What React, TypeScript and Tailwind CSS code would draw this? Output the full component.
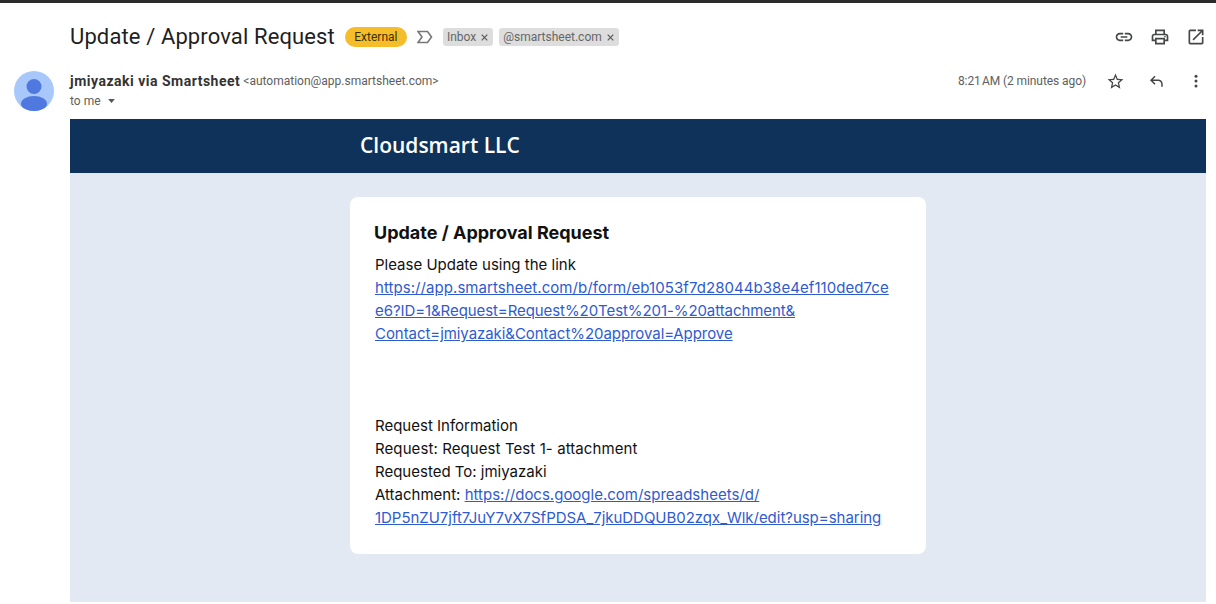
import React from "react";

const Chip = ({ label }: { label: string }) => (
  <span className="flex h-[18px] items-center rounded-[3px] bg-[#dddddd] pl-[4px] pr-[5px] text-[12px] text-[#666666]">
    {label}
    <svg viewBox="0 0 10 10" className="ml-[5px] h-[7px] w-[7px]" fill="none" stroke="#555" strokeWidth="1.6">
      <path d="M1 1l8 8M9 1l-8 8" />
    </svg>
  </span>
);

export default function App() {
  return (
    <div className="h-[604px] w-[1216px] overflow-hidden bg-white font-['Roboto',sans-serif]">
      <div className="h-[3px] bg-[#2b2b2b]" />
      <div className="flex h-[46px] items-start pl-[70px] pr-[10px] pt-[20px]">
        <h1 className="text-[22px] leading-[28px] tracking-[0.12px] text-[#1f1f1f]">Update / Approval Request</h1>
        <span className="ml-[10px] mt-[4px] flex h-[20px] w-[62px] items-center justify-center rounded-[10px] bg-[#f6bd2b] text-[12px] text-[#3c3000]">
          External
        </span>
        <svg viewBox="0 0 16 14" className="ml-[10px] mt-[7px] h-[14px] w-[16px]" fill="none" stroke="#777" strokeWidth="1.6">
          <path d="M1 1.5h9.5L14.5 7l-4 5.5H1L5 7z" />
        </svg>
        <div className="ml-[10px] mt-[5px] flex gap-[6px]">
          <Chip label="Inbox" />
          <Chip label="@smartsheet.com" />
        </div>
        <div className="ml-auto mt-[4px] flex items-center gap-[16px]">
          <svg viewBox="0 0 24 24" className="h-[20px] w-[20px]" fill="#444746">
            <path d="M17 7h-4v2h4c1.65 0 3 1.35 3 3s-1.35 3-3 3h-4v2h4c2.76 0 5-2.24 5-5s-2.24-5-5-5zm-6 8H7c-1.65 0-3-1.35-3-3s1.35-3 3-3h4V7H7c-2.76 0-5 2.24-5 5s2.24 5 5 5h4v-2zm-3-4h8v2H8z" />
          </svg>
          <svg viewBox="0 0 24 24" className="h-[20px] w-[20px]" fill="#444746">
            <path d="M19 8h-1V3H6v5H5c-1.66 0-3 1.34-3 3v6h4v4h12v-4h4v-6c0-1.66-1.34-3-3-3zM8 5h8v3H8V5zm8 14H8v-4h8v4zm2-4v-2H6v2H4v-4c0-.55.45-1 1-1h14c.55 0 1 .45 1 1v4h-2z" />
            <circle cx="18" cy="11.5" r="1" />
          </svg>
          <svg viewBox="0 0 24 24" className="h-[20px] w-[20px]" fill="#444746">
            <path d="M19 19H5V5h7V3H5a2 2 0 0 0-2 2v14a2 2 0 0 0 2 2h14c1.1 0 2-.9 2-2v-7h-2v7zM14 3v2h3.59l-9.83 9.83 1.41 1.41L19 6.41V10h2V3h-7z" />
          </svg>
        </div>
      </div>
      <div className="flex h-[70px] pl-[14px] pr-[11px]">
        <svg viewBox="0 0 40 40" className="mt-[22px] h-[40px] w-[40px] shrink-0">
          <defs>
            <clipPath id="avatar-clip">
              <circle cx="20" cy="20" r="20" />
            </clipPath>
          </defs>
          <circle cx="20" cy="20" r="20" fill="#a8c7fa" />
          <g clipPath="url(#avatar-clip)" fill="#4f79de">
            <circle cx="20" cy="15.5" r="7.5" />
            <ellipse cx="20" cy="33" rx="13" ry="8" />
          </g>
        </svg>
        <div className="ml-[16px] flex-1 pt-[22px]">
          <div className="flex h-[20px] items-center">
            <span className="text-[14px] font-bold tracking-[0.5px] text-[#333333]">jmiyazaki via Smartsheet</span>
            <span className="ml-[3px] text-[12px] text-[#5e5e5e]">&lt;automation@app.smartsheet.com&gt;</span>
          </div>
          <div className="flex h-[20px] items-center text-[12px] text-[#5e5e5e]">
            to me
            <svg viewBox="0 0 10 6" className="ml-[7px] h-[4px] w-[7px]" fill="#555">
              <path d="M0 0h10L5 6z" />
            </svg>
          </div>
        </div>
        <div className="box-content flex h-[20px] items-center gap-[22px] self-start pt-[22px]">
          <span className="mr-[-2px] text-[12px] tracking-[-0.08px] text-[#5e5e5e]">8:21{"\u200a"}AM (2 minutes ago)</span>
          <svg viewBox="0 0 24 24" className="h-[19px] w-[19px]" fill="#444746">
            <path d="M22 9.24l-7.19-.62L12 2 9.19 8.63 2 9.24l5.46 4.73L5.82 21 12 17.27 18.18 21l-1.63-7.03L22 9.24zM12 15.4l-3.76 2.27 1-4.28-3.32-2.88 4.38-.38L12 6.1l1.71 4.04 4.38.38-3.32 2.88 1 4.28L12 15.4z" />
          </svg>
          <svg viewBox="0 0 24 24" className="h-[18px] w-[18px]" fill="#444746">
            <path d="M21 19.5h-2v-3.5c0-2.2-1.8-4-4-4H7.83l3.58 3.59L10 17l-6-6 6-6 1.41 1.41L7.83 10H15c3.31 0 6 2.69 6 6v3.5z" />
          </svg>
          <svg viewBox="0 0 24 24" className="h-[18px] w-[18px]" fill="#444746">
            <circle cx="12" cy="5.5" r="2" />
            <circle cx="12" cy="12" r="2" />
            <circle cx="12" cy="18.5" r="2" />
          </svg>
        </div>
      </div>
      <div className="ml-[70px] mr-[10px] h-[483px] bg-[#e3e9f3]">
        <div className="flex h-[54px] items-center bg-[#0f325b] pl-[290px] font-['Open_Sans',sans-serif] text-[21px] font-semibold text-white">
          Cloudsmart LLC
        </div>
        <div className="mx-auto mt-[24px] h-[357px] w-[576px] rounded-[8px] bg-white pl-[25px] pr-[30px] pt-[24px] font-['Inter',sans-serif] text-[15px] leading-[23px] text-[#111111]">
          <h2 className="-ml-[1px] mb-[8px] text-[18px] font-bold leading-[24px]">Update / Approval Request</h2>
          <p>Please Update using the link</p>
          <a className="block text-[#2f5bd0] underline">
            <span className="tracking-[0.06px]">https://app.smartsheet.com/b/form/eb1053f7d28044b38e4ef110ded7ce</span>
            <br />
            <span className="tracking-[-0.08px]">e6?ID=1&amp;Request=Request%20Test%201-%20attachment&amp;</span>
            <br />
            <span className="tracking-[-0.06px]">Contact=jmiyazaki&amp;Contact%20approval=Approve</span>
          </a>
          <div className="h-[69px]" />
          <p>Request Information</p>
          <p className="tracking-[0.09px]">Request: Request Test 1- attachment</p>
          <p>Requested To: jmiyazaki</p>
          <p>
            Attachment:{" "}
            <a className="text-[#2f5bd0] underline">
              https://docs.google.com/spreadsheets/d/
              <br />
              <span className="tracking-[-0.03px]">1DP5nZU7jft7JuY7vX7SfPDSA_7jkuDDQUB02zqx_Wlk/edit?usp=sharing</span>
            </a>
          </p>
        </div>
      </div>
    </div>
  );
}
